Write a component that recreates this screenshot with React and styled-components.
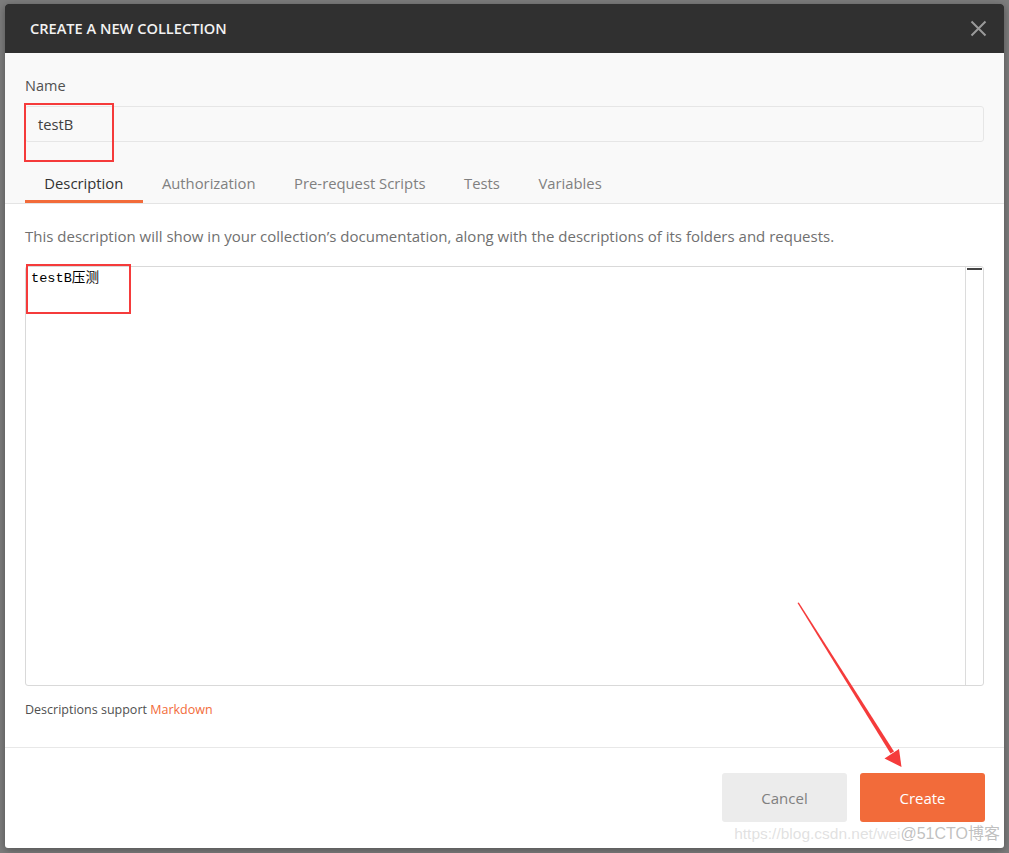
import styled, { createGlobalStyle } from 'styled-components';

const GlobalStyle = createGlobalStyle`
    html, body {
        margin: 0;
        padding: 0;
        background: #7d7d7d;
        font-family: "Open Sans", "Noto Sans", "Noto Sans CJK SC", sans-serif;
    }
`;

const Page = styled.div`
    width: 1009px;
    height: 853px;
    padding: 4px 5px;
    box-sizing: border-box;
    position: relative;
    overflow: hidden;
`;

const Dialog = styled.div`
    position: relative;
    width: 999px;
    height: 844px;
    display: flex;
    flex-direction: column;
    background: #fff;
    border-radius: 3px;
    overflow: hidden;
    box-shadow: 0 2px 8px rgba(0, 0, 0, 0.35);
`;

const Header = styled.div`
    height: 49px;
    flex-shrink: 0;
    display: flex;
    align-items: center;
    justify-content: space-between;
    padding: 0 16px 1px 25px;
    box-sizing: border-box;
    background: #303030;
`;

const Title = styled.h1`
    margin: 0 0 1px;
    color: #f2f2f2;
    font-size: 14.6px;
    font-weight: 600;
`;

const CloseButton = styled.button`
    width: 20px;
    height: 20px;
    padding: 0;
    border: none;
    background: none;
    display: flex;
    align-items: center;
    justify-content: center;
    cursor: pointer;
`;

const TopSection = styled.div`
    background: #f9f9f9;
    padding: 24px 20px 0;
    border-bottom: 1px solid #e4e4e4;
`;

const Label = styled.div`
    color: #505050;
    font-size: 14.5px;
    line-height: 18px;
    margin-bottom: 11px;
`;

const NameInput = styled.div`
    height: 36px;
    box-sizing: border-box;
    border: 1px solid #e6e6e6;
    border-radius: 3px;
    background: #f9f9f9;
    display: flex;
    align-items: center;
    padding-left: 12px;
    color: #404040;
    font-size: 14.7px;
`;

const Tabs = styled.div`
    display: flex;
    margin-top: 25px;
`;

const Tab = styled.div`
    height: 36px;
    box-sizing: border-box;
    padding: 0 19.3px 2px;
    display: flex;
    align-items: center;
    font-size: 14.8px;
    color: ${(p) => (p.$active ? '#333' : '#808080')};
    border-bottom: 3px solid ${(p) => (p.$active ? '#f26b3a' : 'transparent')};
`;

const Content = styled.div`
    flex: 1;
    padding: 22px 20px 0;
    border-bottom: 1px solid #e8e8e8;
`;

const Hint = styled.p`
    margin: 0;
    color: #707070;
    font-size: 15px;
    line-height: 20px;
    white-space: nowrap;
`;

const Editor = styled.div`
    margin-top: 20px;
    height: 420px;
    box-sizing: border-box;
    border: 1px solid #d9d9d9;
    border-radius: 3px;
    display: flex;
    background: #fff;
`;

const EditorText = styled.div`
    flex: 1;
    padding: 4px 5px;
    font-family: "Liberation Mono", "Noto Sans CJK SC", monospace;
    font-size: 13.6px;
    line-height: 16px;
    color: #000;
`;

const ScrollGutter = styled.div`
    width: 17px;
    border-left: 1px solid #dcdcdc;
    padding-top: 1px;
`;

const ScrollThumb = styled.div`
    height: 2px;
    margin: 0 1px;
    background: #444;
`;

const Footnote = styled.div`
    margin-top: 15px;
    font-size: 12.5px;
    line-height: 18px;
    color: #505050;
`;

const Link = styled.span`
    color: #f26b3a;
`;

const Footer = styled.div`
    height: 100px;
    flex-shrink: 0;
    display: flex;
    justify-content: flex-end;
    align-items: flex-start;
    gap: 13px;
    padding: 25px 19px 0 0;
    box-sizing: border-box;
`;

const Button = styled.button`
    width: 125px;
    height: 49px;
    border: none;
    border-radius: 3px;
    font-family: inherit;
    font-size: 15px;
    cursor: pointer;
    background: ${(p) => (p.$primary ? '#f26b3a' : '#ececec')};
    color: ${(p) => (p.$primary ? '#fff' : '#808080')};
`;

const Marker = styled.div`
    position: absolute;
    border: 2px solid #f53b3b;
    pointer-events: none;
`;

const Arrow = styled.svg`
    position: absolute;
    left: 0;
    top: 0;
    pointer-events: none;
`;

const Watermark = styled.div`
    position: absolute;
    right: 9px;
    bottom: 9px;
    display: flex;
    align-items: baseline;
    font-family: "Liberation Sans", "Noto Sans CJK SC", sans-serif;
    pointer-events: none;
`;

const WatermarkUrl = styled.span`
    color: rgba(200, 200, 200, 0.55);
    font-size: 15.5px;
`;

const WatermarkBrand = styled.span`
    color: rgba(150, 150, 150, 0.6);
    font-size: 16px;
`;

const tabs = ['Description', 'Authorization', 'Pre-request Scripts', 'Tests', 'Variables'];

export default function App() {
    return (
        <Page>
            <GlobalStyle />
            <Dialog>
                <Header>
                    <Title>CREATE A NEW COLLECTION</Title>
                    <CloseButton aria-label="Close">
                        <svg width="17" height="17" viewBox="0 0 17 17">
                            <path d="M1.5 1.5 L15.5 15.5 M15.5 1.5 L1.5 15.5" stroke="#9a9a9a" strokeWidth="2" />
                        </svg>
                    </CloseButton>
                </Header>
                <TopSection>
                    <Label>Name</Label>
                    <NameInput>testB</NameInput>
                    <Tabs>
                        {tabs.map((t, i) => (
                            <Tab key={t} $active={i === 0}>{t}</Tab>
                        ))}
                    </Tabs>
                </TopSection>
                <Content>
                    <Hint>
                        This description will show in your collection’s documentation, along with the descriptions of its folders and requests.
                    </Hint>
                    <Editor>
                        <EditorText>testB压测</EditorText>
                        <ScrollGutter>
                            <ScrollThumb />
                        </ScrollGutter>
                    </Editor>
                    <Footnote>
                        Descriptions support <Link>Markdown</Link>
                    </Footnote>
                </Content>
                <Footer>
                    <Button>Cancel</Button>
                    <Button $primary>Create</Button>
                </Footer>
            </Dialog>

            <Marker style={{ left: 24, top: 103, width: 86, height: 55 }} />
            <Marker style={{ left: 26, top: 264, width: 101, height: 46 }} />
            <Arrow width="1009" height="853">
                <polygon points="797.5,603 798.8,602.4 894,751.5 890.5,753.5" fill="#f53b3b" />
                <polygon points="884.5,758.5 899,749 901.5,767" fill="#f53b3b" />
            </Arrow>
            <Watermark>
                <WatermarkUrl>https://blog.csdn.net/wei</WatermarkUrl>
                <WatermarkBrand>@51CTO博客</WatermarkBrand>
            </Watermark>
        </Page>
    );
}
